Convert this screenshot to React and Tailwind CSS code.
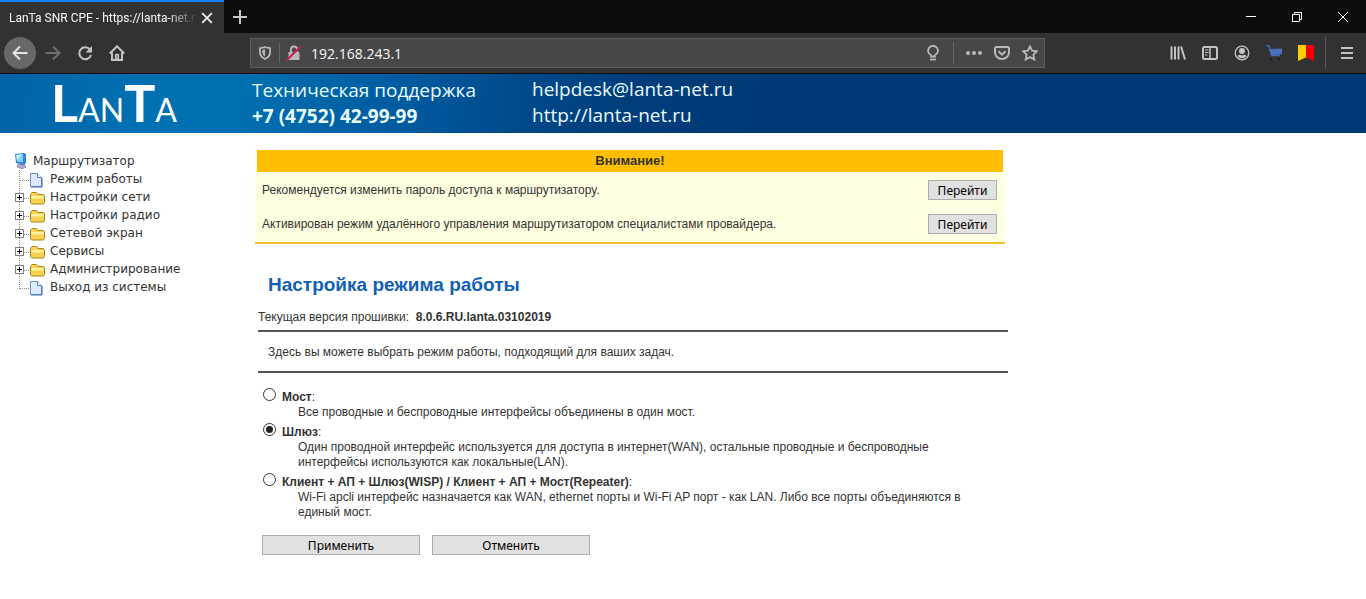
import { useState } from 'react';

const treeItems = [
    { label: 'Режим работы', type: 'doc' },
    { label: 'Настройки сети', type: 'folder' },
    { label: 'Настройки радио', type: 'folder' },
    { label: 'Сетевой экран', type: 'folder' },
    { label: 'Сервисы', type: 'folder' },
    { label: 'Администрирование', type: 'folder' },
    { label: 'Выход из системы', type: 'doc' },
];

const warnings = [
    'Рекомендуется изменить пароль доступа к маршрутизатору.',
    'Активирован режим удалённого управления маршрутизатором специалистами провайдера.',
];

const modes = [
    {
        id: 'bridge',
        title: 'Мост',
        text: 'Все проводные и беспроводные интерфейсы объединены в один мост.',
    },
    {
        id: 'gateway',
        title: 'Шлюз',
        text: 'Один проводной интерфейс используется для доступа в интернет(WAN), остальные проводные и беспроводные интерфейсы используются как локальные(LAN).',
    },
    {
        id: 'wisp',
        title: 'Клиент + АП + Шлюз(WISP) / Клиент + АП + Мост(Repeater)',
        text: 'Wi-Fi apcli интерфейс назначается как WAN, ethernet порты и Wi-Fi AP порт - как LAN. Либо все порты объединяются в единый мост.',
    },
];

const Icon = ({ children, size = 16 }) => (
    <svg width={size} height={size} viewBox="0 0 16 16" fill="none" stroke="currentColor" strokeWidth="2" aria-hidden="true">
        {children}
    </svg>
);

const ToolButton = ({ label, className = 'text-[#c4c4c6]', children }) => (
    <button type="button" aria-label={label} className={`flex size-8 shrink-0 items-center justify-center ${className}`}>
        {children}
    </button>
);

const TabStrip = () => (
    <div className="flex h-[33px] bg-[#0c0c0d]">
        <div className="flex w-[224px] shrink-0 items-center border-t-2 border-[#1485f5] bg-[#323234] pr-[7px] pl-[9px]">
            <span className="flex-1 overflow-hidden text-xs whitespace-nowrap text-[#f9f9fa] [font-family:Roboto,sans-serif] [mask-image:linear-gradient(to_right,black_84%,transparent)]">
                LanTa SNR CPE - https://lanta-net.r
            </span>
            <button type="button" aria-label="Закрыть вкладку" className="flex size-5 items-center justify-center text-[#f0f0f0]">
                <Icon size={14}><path d="M2.5 2.5l11 11M13.5 2.5l-11 11" /></Icon>
            </button>
        </div>
        <button type="button" aria-label="Новая вкладка" className="flex w-8 items-center justify-center text-[#c9c9cb]">
            <Icon><path d="M8 1v14M1 8h14" /></Icon>
        </button>
        <div className="ml-auto flex text-white">
            <button type="button" aria-label="Свернуть" className="flex w-[46px] items-center justify-center">
                <svg width="10" height="10" stroke="currentColor"><path d="M0 4.500h10" /></svg>
            </button>
            <button type="button" aria-label="Развернуть" className="flex w-[46px] items-center justify-center">
                <svg width="10" height="10" fill="none" stroke="currentColor"><path d="M.5 2.500h7v7h-7zM2.500 2.500v-2h7v7h-2" /></svg>
            </button>
            <button type="button" aria-label="Закрыть" className="flex w-[46px] items-center justify-center">
                <svg width="10" height="10" stroke="currentColor"><path d="M0 0l10 10M10 0L0 10" /></svg>
            </button>
        </div>
    </div>
);

const Toolbar = () => (
    <div className="flex h-[41px] items-center border-b border-[#0c0c0d] bg-[#323234] pr-[3px] pl-1">
        <ToolButton label="Назад" className="rounded-full bg-[#68686a] text-[#e4e4e4]">
            <Icon><path d="M15.500 8H1.500M8 1.500L1.500 8L8 14.500" /></Icon>
        </ToolButton>
        <ToolButton label="Вперёд" className="ml-px text-[#6e6e70]">
            <Icon><path d="M.5 8h14M8 1.500l6.500 6.500L8 14.500" /></Icon>
        </ToolButton>
        <ToolButton label="Обновить">
            <Icon>
                <path d="M13 4.500a6 6 0 1 0 1 5.500" />
                <path d="M15 1v6.500H8.500z" fill="currentColor" stroke="none" />
            </Icon>
        </ToolButton>
        <ToolButton label="Домой">
            <Icon>
                <path d="M.8 8.500L8 1.300l7.200 7.200M3 7.500V15h10V7.500" />
                <path d="M8 8.500V14M6.500 9.500h3V14h-3z" strokeWidth="1.200" />
            </Icon>
        </ToolButton>

        <div className="mx-[117px] flex h-[30px] flex-1 items-center border border-[#5c5c5e] bg-[#474749] text-[#b9b9bb]">
            <span className="flex w-7 justify-center">
                <Icon size={14}>
                    <path d="M8 1.200l5.800 1.300v4.500c0 3.500-2.200 6-5.800 7.800-3.600-1.800-5.800-4.300-5.800-7.800V2.500z" />
                    <path d="M8 4v8c-1.900-1.200-3-2.900-3-5V4.600z" fill="currentColor" stroke="none" />
                </Icon>
            </span>
            <span className="h-5 w-px bg-[#666668]" />
            <span className="flex w-7 justify-center">
                <Icon>
                    <path d="M5 7V4.500a3 3 0 0 1 6 0V7" />
                    <path d="M2.500 7h11v8h-11z" fill="currentColor" stroke="none" />
                    <path d="M1 15L14.500 1.500" stroke="#c9204f" strokeWidth="2.200" />
                </Icon>
            </span>
            <input
                type="text"
                aria-label="Адрес"
                defaultValue="192.168.243.1"
                className="min-w-0 flex-1 bg-transparent pt-px pl-[3px] text-sm text-[#f9f9fa] outline-none"
            />
            <span className="flex w-8 justify-center">
                <Icon>
                    <path d="M6 11.500V10.200a4.900 4.900 0 1 1 4 0v1.300z" strokeWidth="1.800" />
                    <path d="M5 14.500h6" strokeWidth="1.800" />
                </Icon>
            </span>
            <span className="mr-1.5 ml-1 h-[22px] w-px bg-[#666668]" />
            <ToolButton label="Действия" className="w-7 text-[#b9b9bb]">
                <Icon>
                    <g fill="currentColor" stroke="none">
                        <circle cx="2" cy="8" r="2" /><circle cx="8" cy="8" r="2" /><circle cx="14" cy="8" r="2" />
                    </g>
                </Icon>
            </ToolButton>
            <ToolButton label="Сохранить в Pocket" className="w-7 text-[#b9b9bb]">
                <Icon>
                    <path d="M2.500 2h11a1.500 1.500 0 0 1 1.500 1.500V7.500a7 6.500 0 0 1-14 0v-4A1.500 1.500 0 0 1 2.500 2z" />
                    <path d="M4.500 6.300L8 9.700l3.500-3.400" />
                </Icon>
            </ToolButton>
            <ToolButton label="В закладки" className="w-7 text-[#b9b9bb]">
                <Icon>
                    <path d="M8 1.300l2.100 4.400 4.800.6-3.500 3.300.9 4.900L8 12.100l-4.300 2.400.9-4.900L1.100 6.300l4.800-.6z" strokeWidth="1.800" />
                </Icon>
            </ToolButton>
        </div>

        <ToolButton label="Библиотека">
            <Icon><path d="M1.500 1.500v13M5 1.500v13M8.500 1.500v13M11 1.500l4 13" /></Icon>
        </ToolButton>
        <ToolButton label="Боковая панель">
            <Icon>
                <rect x="1" y="2" width="14" height="12" rx="1.500" />
                <path d="M8 2v12" strokeWidth="1.500" />
                <path d="M3 5h3.500M3 7.500h3.500M3 10h2.500" strokeWidth="1" />
            </Icon>
        </ToolButton>
        <ToolButton label="Учётная запись">
            <Icon>
                <circle cx="8" cy="8" r="6.800" strokeWidth="1.300" />
                <g fill="currentColor" stroke="none">
                    <circle cx="8" cy="6" r="3" />
                    <path d="M3.500 11c1-1.300 2-1.300 2.600-1.300.9 1 2.900 1 3.800 0 .6 0 1.600 0 2.600 1.300-2 3-7 3-9 0z" />
                </g>
            </Icon>
        </ToolButton>
        <ToolButton label="Покупки">
            <Icon>
                <path d="M0 .7h3l2.700 9.800h8.300" stroke="#4467b0" strokeWidth="1.500" />
                <path d="M3 4L16 3.500v5.500L5.500 11z" fill="#4a70bd" stroke="none" />
                <circle cx="5" cy="14" r="1.400" fill="#222" stroke="none" />
                <circle cx="13" cy="14" r="1.400" fill="#222" stroke="none" />
            </Icon>
        </ToolButton>
        <ToolButton label="Закладки">
            <Icon>
                <path d="M0 0h8v12.500L0 16z" fill="#ffcc00" stroke="none" />
                <path d="M8 0h8v16l-8-3.500z" fill="#f00000" stroke="none" />
            </Icon>
        </ToolButton>
        <span className="mr-[5px] ml-[3px] h-8 w-px bg-[#5a5a5c]" />
        <ToolButton label="Меню">
            <Icon><path d="M2 3h12M2 8h12M2 13h12" /></Icon>
        </ToolButton>
    </div>
);

const Banner = () => (
    <header className="flex h-[59px] items-center bg-[linear-gradient(100deg,#0063a6_0%,#0070b2_10%,#006fb0_18%,#005a9f_30%,#004a8b_38%,#003d7a_46%,#003a76_55%,#003a76_100%)] text-[19px] leading-[26px] text-[#e8fbff]">
        <div className="w-[252px] pt-1 pl-[51px] text-[32px] leading-[54px] text-white [font-family:Lato,sans-serif]">
            <span className="text-[52px] font-bold">L</span>AN<span className="text-[52px] font-bold">T</span>A
        </div>
        <div className="w-[280px] pb-px">
            <p>Техническая поддержка</p>
            <p className="font-bold">+7 (4752) 42-99-99</p>
        </div>
        <div className="pb-[3px]">
            <p><a href="#mail">helpdesk@lanta-net.ru</a></p>
            <p><a href="#site">http://lanta-net.ru</a></p>
        </div>
    </header>
);

const TreeIcon = ({ type, last }) => (
    <svg width="32" height="18" className="shrink-0" aria-hidden="true">
        <path d={last ? 'M5.500 0v11' : 'M5.500 0v18'} stroke="#8a8a8a" strokeDasharray="1 1" />
        <path d="M6 10.500h10" stroke="#8a8a8a" strokeDasharray="1 1" />
        {type === 'folder' ? (
            <>
                <rect x="1.500" y="5.500" width="8" height="8" fill="#fff" stroke="#808080" />
                <path d="M3 9.500h5M5.500 7v5" stroke="#000" />
                <path d="M16.500 14.500v-8l1.500-2h4.500l1.500 2h5.500l1 1v7l-1 1.500h-12z" fill="#f5d253" stroke="#a58420" />
                <path d="M17.500 8h12v2.500h-12z" fill="#fdf0a0" />
            </>
        ) : (
            <>
                <path d="M16.500 3.500h7l4 4v9h-11z" fill="#dcebfb" stroke="#6f8fc4" />
                <path d="M23.500 3.500v4h4" fill="#fff" stroke="#5a7db8" />
                <path d="M28 8v9H17" fill="none" stroke="#4069ad" />
            </>
        )}
    </svg>
);

const Sidebar = () => (
    <nav className="w-[255px] shrink-0 pt-[19px] pl-[14px] text-xs leading-[18px] text-[#333] [font-family:'DejaVu_Sans',sans-serif]">
        <a href="#root" className="flex h-[18px] items-center gap-[5px]">
            <svg width="14" height="18" aria-hidden="true">
                <path d="M4 12h6l2 3-4 2-5-2z" fill="#b4a6cc" stroke="#8274a4" strokeWidth=".6" />
                <path d="M1 2l9-1 2 1v9l-2 2-8-2z" fill="#2f83d8" />
                <path d="M2 3l7-.8V10.500L3 9.500z" fill="#7fd0fb" />
                <path d="M2 3l6-.7L3 8z" fill="#c8effe" />
            </svg>
            Маршрутизатор
        </a>
        <ul>
            {treeItems.map((item, i) => (
                <li key={item.label}>
                    <a href={`#item-${i}`} className="flex gap-1 whitespace-nowrap">
                        <TreeIcon type={item.type} last={i === treeItems.length - 1} />
                        {item.label}
                    </a>
                </li>
            ))}
        </ul>
    </nav>
);

const FormButton = ({ className, ...props }) => (
    <button
        className={`h-5 border border-[#adadad] bg-[#e1e1e1] pt-px text-xs leading-[18px] text-black [font-family:'Noto_Sans',sans-serif] ${className}`}
        {...props}
    />
);

const Warning = () => (
    <section className="max-w-[750px] border-b-2 border-[#f0c02c]">
        <h2 className="mx-[2px] h-[22px] bg-[#ffbf00] text-center text-[13px] leading-[22px] font-bold">Внимание!</h2>
        <div className="bg-[#ffffe1] py-px">
            {warnings.map((text) => (
                <div key={text} className="flex h-[34px] items-center justify-between pr-2 pl-[7px]">
                    <p>{text}</p>
                    <FormButton type="button" className="w-[69px]">Перейти</FormButton>
                </div>
            ))}
        </div>
    </section>
);

const ModeForm = () => {
    const [mode, setMode] = useState('gateway');

    return (
        <form className="pt-[14px] pl-1" onSubmit={(e) => e.preventDefault()}>
            {modes.map((m) => (
                <div key={m.id} className="flex gap-[5px]">
                    <input
                        type="radio"
                        id={m.id}
                        name="mode"
                        checked={mode === m.id}
                        onChange={() => setMode(m.id)}
                        className="mx-px mt-px size-[13px] shrink-0 appearance-none rounded-full border border-[#333] bg-white bg-clip-content p-[2px] checked:bg-[#222]"
                    />
                    <div className="pt-[3px] pb-[2px]">
                        <label htmlFor={m.id}><b>{m.title}</b>:</label>
                        <p className="pr-9 pl-4">{m.text}</p>
                    </div>
                </div>
            ))}
            <div className="mt-[13px] flex gap-3">
                <FormButton type="submit" className="w-[158px]">Применить</FormButton>
                <FormButton type="button" className="w-[158px]" onClick={() => setMode('gateway')}>Отменить</FormButton>
            </div>
        </form>
    );
};

export default function App() {
    return (
        <div className="min-h-screen bg-white [font-family:'Open_Sans',sans-serif]">
            <TabStrip />
            <Toolbar />
            <Banner />
            <div className="flex">
                <Sidebar />
                <main className="flex-1 pt-[17px] text-xs leading-[15px] text-[#333] [font-family:'Liberation_Sans',Arial,sans-serif]">
                    <Warning />
                    <div className="ml-[3px] max-w-[750px]">
                        <h1 className="pt-[29px] pl-[10px] text-[19px] leading-6 font-bold text-[#1060b8]">Настройка режима работы</h1>
                        <p className="pt-[13px] pb-[5px]">
                            Текущая версия прошивки:&nbsp; <b>8.0.6.RU.lanta.03102019</b>
                        </p>
                        <p className="border-y-2 border-[#555] pt-[13px] pb-[11px] pl-[10px]">
                            Здесь вы можете выбрать режим работы, подходящий для ваших задач.
                        </p>
                        <ModeForm />
                    </div>
                </main>
            </div>
        </div>
    );
}
